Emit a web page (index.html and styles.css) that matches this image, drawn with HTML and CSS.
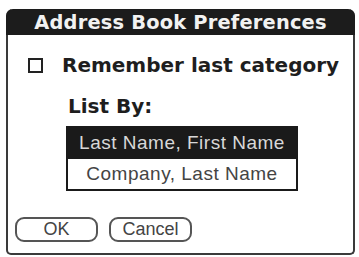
FILE: index.html
```html
<!DOCTYPE html>
<html>
<head>
<meta charset="utf-8">
<link rel="stylesheet" href="styles.css">
</head>
<body>
<div class="dialog">
  <div class="title">Address Book Preferences</div>
  <div class="content">
    <div class="check-row">
      <span class="checkbox"></span>
      <span class="check-label">Remember last category</span>
    </div>
    <div class="list-label">List By:</div>
    <div class="list">
      <div class="item selected">Last Name, First Name</div>
      <div class="item">Company, Last Name</div>
    </div>
    <div class="buttons">
      <div class="btn">OK</div>
      <div class="btn">Cancel</div>
    </div>
  </div>
</div>
</body>
</html>
```
FILE: styles.css
```css
html, body {
  margin: 0;
  padding: 0;
  background: #fff;
}
body {
  width: 359px;
  height: 257px;
  overflow: hidden;
  padding-top: 9px;
  padding-left: 6px;
  box-sizing: border-box;
}
.dialog {
  width: 349px;
  height: 246px;
  box-sizing: border-box;
  border: 2px solid #3a3a3a;
  border-top: none;
  border-radius: 7px 7px 5px 5px;
  display: flex;
  flex-direction: column;
}
.title {
  height: 26px;
  margin: 0 -2px;
  background: #1c1c1c;
  color: #f2f2f2;
  border-radius: 7px 7px 0 0;
  font-family: "DejaVu Sans", sans-serif;
  font-weight: bold;
  font-size: 19.4px;
  line-height: 27px;
  text-align: center;
  letter-spacing: 0.2px;
}
.content {
  flex: 1;
  display: flex;
  flex-direction: column;
  padding-left: 20px;
}
.check-row {
  display: flex;
  align-items: center;
  margin-top: 22px;
  height: 16px;
}
.checkbox {
  width: 15px;
  height: 15px;
  box-sizing: border-box;
  border: 2px solid #222;
  flex: none;
}
.check-label {
  margin-left: 19px;
  font-family: "DejaVu Sans", sans-serif;
  font-weight: bold;
  font-size: 20px;
  color: #1e1e1e;
  line-height: 16px;
}
.list-label {
  margin-top: 23px;
  margin-left: 40px;
  font-family: "DejaVu Sans", sans-serif;
  font-weight: bold;
  font-size: 20px;
  line-height: 20px;
  color: #1e1e1e;
}
.list {
  margin-top: 10px;
  margin-left: 38px;
  width: 232px;
  height: 65px;
  box-sizing: border-box;
  border: 2px solid #1a1a1a;
  display: flex;
  flex-direction: column;
}
.item {
  flex: 1;
  font-family: "Liberation Sans", sans-serif;
  font-size: 19px;
  color: #444;
  text-align: center;
  line-height: 30px;
  letter-spacing: 0.5px;
}
.item.selected {
  background: #1a1a1a;
  color: #d8d8d8;
}
.buttons {
  display: flex;
  gap: 11px;
  margin-top: 26px;
  margin-left: -13px;
}
.btn {
  width: 83px;
  height: 25px;
  box-sizing: border-box;
  border: 2px solid #555;
  border-radius: 9px;
  font-family: "Liberation Sans", sans-serif;
  font-size: 18px;
  color: #444;
  text-align: center;
  line-height: 21px;
}
```
